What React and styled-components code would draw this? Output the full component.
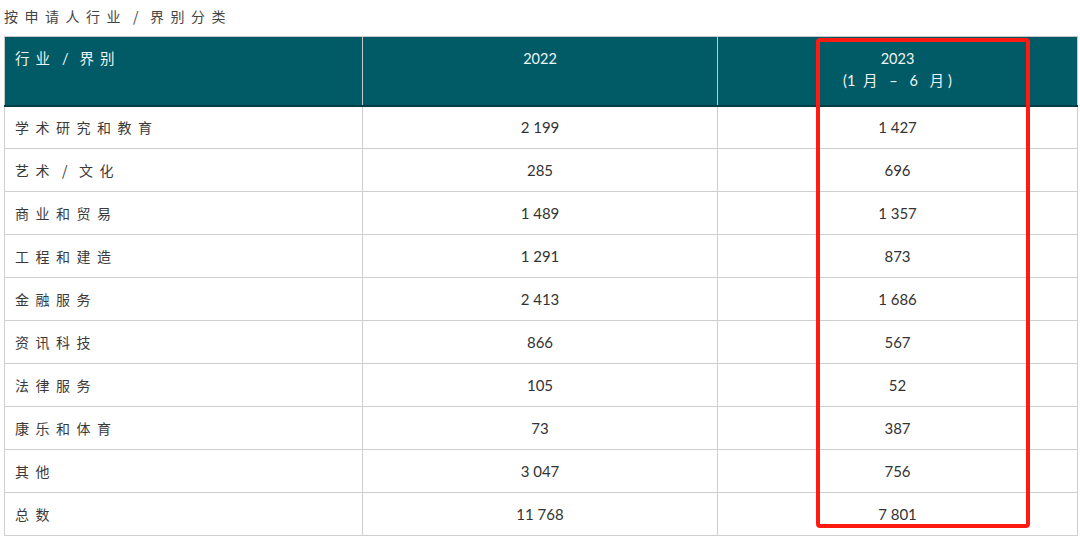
import React from "react";
import styled, { createGlobalStyle } from "styled-components";

const rows = [
  ["学术研究和教育", "2 199", "1 427"],
  [["艺术", "文化"], "285", "696"],
  ["商业和贸易", "1 489", "1 357"],
  ["工程和建造", "1 291", "873"],
  ["金融服务", "2 413", "1 686"],
  ["资讯科技", "866", "567"],
  ["法律服务", "105", "52"],
  ["康乐和体育", "73", "387"],
  ["其他", "3 047", "756"],
  ["总数", "11 768", "7 801"],
];

// "a / b" with the narrow slash spacing used in the source
const Split = ({ parts }) => (
  <>
    {parts[0]}
    <Slash>/</Slash>
    {parts[1]}
  </>
);

function App() {
  return (
    <Page>
      <GlobalStyle />
      <Title>
        <Split parts={["按申请人行业", "界别分类"]} />
      </Title>
      <TableWrap>
        <Table>
          <colgroup>
            <col style={{ width: 358 }} />
            <col style={{ width: 355 }} />
            <col style={{ width: 360 }} />
          </colgroup>
          <thead>
            <tr>
              <Th $align="left">
                <Split parts={["行业", "界别"]} />
              </Th>
              <Th>2022</Th>
              <Th>
                2023
                <br />
                (1<Months> 月 – 6 月</Months>)
              </Th>
            </tr>
          </thead>
          <tbody>
            {rows.map(([label, a, b], i) => (
              <tr key={i}>
                <Label>
                  {Array.isArray(label) ? <Split parts={label} /> : label}
                </Label>
                <Num>{a}</Num>
                <Num>{b}</Num>
              </tr>
            ))}
          </tbody>
        </Table>
        <Highlight />
      </TableWrap>
    </Page>
  );
}

export default App;

const GlobalStyle = createGlobalStyle`
  body {
    margin: 0;
    background: #ffffff;
    font-family: "Lato", "Noto Sans CJK SC", sans-serif;
  }
`;

const Page = styled.div`
  width: 1080px;
  height: 537px;
  padding: 0 3px 0 4px;
  box-sizing: border-box;
  overflow: hidden;
`;

const Title = styled.div`
  height: 36px;
  line-height: 32px;
  font-size: 14px;
  letter-spacing: 6.5px;
  color: #444444;
  font-family: "Noto Sans CJK SC", sans-serif;
`;

const Slash = styled.span`
  display: inline-block;
  margin: 0 5px 0 6px;
`;

const TableWrap = styled.div`
  position: relative;
`;

const Table = styled.table`
  width: 1073px;
  border-collapse: collapse;
  table-layout: fixed;
  border: 1px solid #cfcfcf;
`;

const Th = styled.th`
  height: 69px;
  box-sizing: border-box;
  background: #005b67;
  border: 1px solid #c8c8c8;
  border-bottom: 2px solid #003e47;
  color: #eef4f4;
  font-weight: 400;
  font-size: 14.5px;
  line-height: 22px;
  text-align: ${(p) => p.$align || "center"};
  vertical-align: top;
  padding: 11px 10px 0;
  letter-spacing: ${(p) => (p.$align === "left" ? "6px" : "0")};
  font-family: "Lato", "Noto Sans CJK SC", sans-serif;
`;

const Months = styled.span`
  letter-spacing: 4px;
`;

const Label = styled.td`
  height: 43px;
  box-sizing: border-box;
  border: 1px solid #cfcfcf;
  padding: 0 10px;
  font-size: 14px;
  letter-spacing: 6.5px;
  color: #3a3a3a;
  font-family: "Noto Sans CJK SC", sans-serif;
`;

const Num = styled.td`
  height: 43px;
  box-sizing: border-box;
  border: 1px solid #cfcfcf;
  text-align: center;
  font-size: 15px;
  color: #333333;
  font-family: "Lato", "Noto Sans CJK SC", sans-serif;
`;

const Highlight = styled.div`
  position: absolute;
  left: 812px;
  top: 2px;
  width: 214px;
  height: 490px;
  box-sizing: border-box;
  border: 4px solid #ff1a12;
  border-radius: 4px;
  pointer-events: none;
`;
